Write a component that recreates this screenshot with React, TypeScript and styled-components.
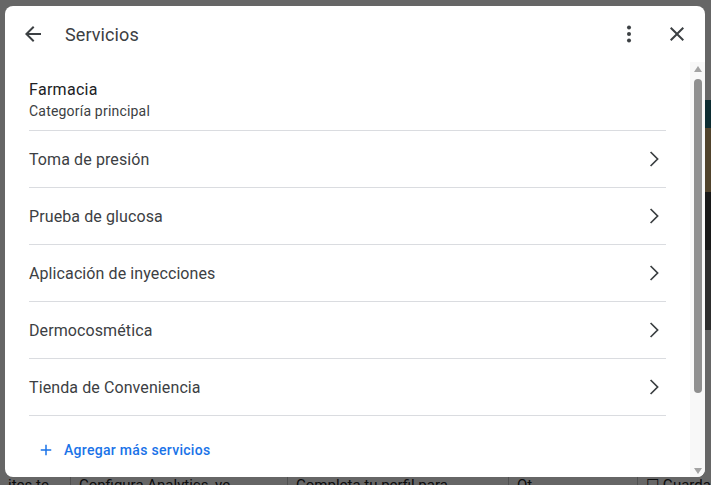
import React from 'react'
import styled, { createGlobalStyle } from 'styled-components'

const GlobalStyle = createGlobalStyle`
  html, body {
    margin: 0;
    padding: 0;
    width: 711px;
    height: 485px;
    overflow: hidden;
    font-family: Roboto, "Liberation Sans", Arial, sans-serif;
  }
`

const Page = styled.div`
  position: relative;
  width: 711px;
  height: 485px;
  background: #ffffff;
  overflow: hidden;
`

const PageBottom = styled.div`
  position: absolute;
  left: 0;
  right: 0;
  bottom: -12px;
  height: 22px;
  display: flex;
  font-size: 15px;
  line-height: 20px;
  color: #202124;
`

const PageCell = styled.div<{ $w: number }>`
  width: ${({ $w }) => $w}px;
  flex-shrink: 0;
  padding-left: 8px;
  border-right: 1px solid #c8c8c8;
  white-space: nowrap;
  overflow: hidden;
`

const PageStrip = styled.div`
  position: absolute;
  right: 0;
  top: 100px;
  width: 12px;
  height: 230px;
  background: linear-gradient(#1f6f7a 0 12%, #c9a66b 12% 40%, #3c3c3c 40% 65%, #707070 65% 100%);
`

const Scrim = styled.div`
  position: absolute;
  inset: 0;
  background: rgba(0, 0, 0, 0.6);
`

const Dialog = styled.div`
  position: absolute;
  left: 5px;
  top: 6px;
  width: 700px;
  height: 471px;
  background: #ffffff;
  border-radius: 8px;
  display: flex;
  flex-direction: column;
  overflow: hidden;
`

const Header = styled.div`
  height: 56px;
  flex-shrink: 0;
  display: flex;
  align-items: center;
  padding: 0 16px;
`

const Title = styled.div`
  flex: 1;
  margin-left: 20px;
  font-size: 18px;
  color: #3c4043;
  letter-spacing: 0.1px;
`

const IconButton = styled.button<{ $gap?: number }>`
  width: 24px;
  height: 24px;
  padding: 0;
  border: none;
  background: none;
  display: flex;
  align-items: center;
  justify-content: center;
  color: #3c4043;
  margin-left: ${({ $gap }) => $gap ?? 0}px;
`

const Body = styled.div`
  flex: 1;
  display: flex;
  min-height: 0;
`

const Content = styled.div`
  flex: 1;
  padding: 17px 24px 0 24px;
`

const Category = styled.div`
  padding-bottom: 9px;
  border-bottom: 1px solid #dadce0;
`

const CategoryName = styled.div`
  font-size: 16px;
  line-height: 22px;
  letter-spacing: 0.3px;
  color: #202124;
`

const CategoryLabel = styled.div`
  font-size: 14px;
  line-height: 20px;
  letter-spacing: 0.2px;
  color: #3c4043;
`

const Row = styled.div`
  height: 56px;
  display: flex;
  align-items: center;
  justify-content: space-between;
  border-bottom: 1px solid #dadce0;
  font-size: 16px;
  letter-spacing: 0.1px;
  color: #3c4043;
`

const AddLink = styled.div`
  display: flex;
  align-items: center;
  gap: 9px;
  height: 24px;
  margin-top: 22px;
  padding-left: 8px;
  font-size: 14px;
  font-weight: 500;
  letter-spacing: 0.3px;
  color: #1a73e8;
`

const Scrollbar = styled.div`
  width: 15px;
  flex-shrink: 0;
  background: #f8f8f8;
  display: flex;
  flex-direction: column;
  align-items: center;
  padding: 4px 0 3px;
  box-sizing: border-box;
`

const Arrow = styled.div<{ $down?: boolean }>`
  width: 0;
  height: 0;
  border-left: 4px solid transparent;
  border-right: 4px solid transparent;
  ${({ $down }) =>
    $down ? 'border-top: 6px solid #a3a3a3;' : 'border-bottom: 6px solid #a3a3a3;'}
`

const Thumb = styled.div`
  width: 8px;
  height: 314px;
  margin-top: 7px;
  border-radius: 4px;
  background: #8f8f8f;
`

const Spacer = styled.div`
  flex: 1;
`

const Chevron = () => (
  <svg width="24" height="24" viewBox="0 0 24 24" fill="none" stroke="#3c4043" strokeWidth="1.7">
    <path d="M8.6 5 15.6 12 8.6 19" />
  </svg>
)

const services = [
  'Toma de presión',
  'Prueba de glucosa',
  'Aplicación de inyecciones',
  'Dermocosmética',
  'Tienda de Conveniencia',
]

export default function App() {
  return (
    <Page>
      <GlobalStyle />
      <PageStrip />
      <PageBottom>
        <PageCell $w={62}>ites te</PageCell>
        <PageCell $w={208}>Configura Analytics, ve</PageCell>
        <PageCell $w={212}>Completa tu perfil para</PageCell>
        <PageCell $w={120}>Ot</PageCell>
        <PageCell $w={109}>☐ Guardar</PageCell>
      </PageBottom>
      <Scrim />
      <Dialog>
        <Header>
          <IconButton aria-label="Atrás">
            <svg width="24" height="24" viewBox="0 0 24 24" fill="#3c4043">
              <path d="M20 11H7.83l5.59-5.59L12 4l-8 8 8 8 1.41-1.41L7.83 13H20v-2z" />
            </svg>
          </IconButton>
          <Title>Servicios</Title>
          <IconButton aria-label="Más opciones">
            <svg width="24" height="24" viewBox="0 0 24 24" fill="#3c4043">
              <circle cx="12" cy="5.5" r="2" />
              <circle cx="12" cy="12" r="2" />
              <circle cx="12" cy="18.5" r="2" />
            </svg>
          </IconButton>
          <IconButton aria-label="Cerrar" $gap={24}>
            <svg width="24" height="24" viewBox="0 0 24 24" fill="#3c4043">
              <path d="M19 6.41 17.59 5 12 10.59 6.41 5 5 6.41 10.59 12 5 17.59 6.41 19 12 13.41 17.59 19 19 17.59 13.41 12z" />
            </svg>
          </IconButton>
        </Header>
        <Body>
          <Content>
            <Category>
              <CategoryName>Farmacia</CategoryName>
              <CategoryLabel>Categoría principal</CategoryLabel>
            </Category>
            {services.map((s) => (
              <Row key={s}>
                {s}
                <Chevron />
              </Row>
            ))}
            <AddLink>
              <svg width="18" height="18" viewBox="0 0 24 24" fill="#1a73e8">
                <path d="M19 13h-6v6h-2v-6H5v-2h6V5h2v6h6v2z" />
              </svg>
              Agregar más servicios
            </AddLink>
          </Content>
          <Scrollbar>
            <Arrow />
            <Thumb />
            <Spacer />
            <Arrow $down />
          </Scrollbar>
        </Body>
      </Dialog>
    </Page>
  )
}
